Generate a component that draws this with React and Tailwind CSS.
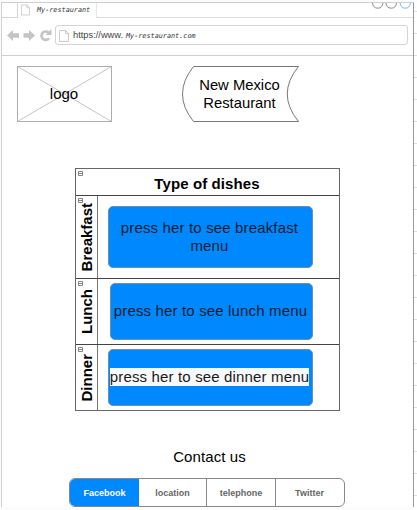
import React from "react";

function PageIcon({ className }) {
  return (
    <svg className={className} viewBox="0 0 10 12" fill="none" stroke="#cbcbcb">
      <path d="M.5 .5H6.5L9.5 3.5V11.5H.5Z M6.5 .5V3.5H9.5" />
    </svg>
  );
}

function CollapseIcon() {
  return (
    <svg className="absolute left-[2px] top-[2px] h-[5px] w-[5px]" viewBox="0 0 5 5">
      <path d="M.5 .5H4.5V4.5H.5Z M1 2.5H4" fill="none" stroke="#666" strokeWidth=".8" />
    </svg>
  );
}

function Browser() {
  return (
    <header className="h-[53px] shrink-0 border-b border-[#cfcfcf]">
      <div className="flex h-[15px]">
        <div className="w-4 border-b border-r border-[#d4d4d4]" />
        <div className="flex w-[79px] border-r border-[#e6e6e6] pl-[3px]">
          <PageIcon className="mt-px h-[12px] w-[9px]" />
          <span className="ml-[7px] whitespace-nowrap font-['DejaVu_Sans_Mono',monospace] text-[6.8px] italic leading-[14px] text-[#333]">
            My-restaurant
          </span>
        </div>
        <div className="flex grow justify-end border-b border-[#dedede]">
          <svg className="h-[9px] w-[44px]" viewBox="0 0 44 9" fill="none">
            <path d="M3.500 0A5.300 6 0 0 0 14 0M17 0A5.300 6 0 0 0 27.500 0" stroke="#8b8b8b" />
            <path d="M31 0A5.300 6 0 0 0 41.500 0" stroke="#7eb8e6" />
          </svg>
        </div>
      </div>
      <div className="flex pt-[7px]">
        <svg className="ml-[4px] mt-[2px] h-[16px] w-[46px]" viewBox="0 0 46 16">
          <path d="M1 8.500L7 3V6.200H13V10.800H7V14Z M29 8.500L23 3V6.200H17.500V10.800H23V14Z" fill="#c4c4c4" />
          <path d="M43 11.300A4.200 4.200 0 1 1 42.500 5.500" fill="none" stroke="#c4c4c4" strokeWidth="2.600" />
          <path d="M45.500 2V8H39.500Z" fill="#c4c4c4" />
        </svg>
        <div className="ml-[3px] flex h-[20px] w-[353px] rounded-[3px] border border-[#d4d4d4]">
          <PageIcon className="ml-[3px] mt-[4px] h-[12px] w-[10px]" />
          <span className="ml-[4px] w-[53px] whitespace-nowrap text-[9.3px] leading-[18px] text-[#444]">https://www.</span>
          <span className="whitespace-nowrap font-['DejaVu_Sans_Mono',monospace] text-[6.8px] italic leading-[20px] text-[#333]">
            My-restaurant.com
          </span>
        </div>
      </div>
    </header>
  );
}

function Lane({ label, height, children }) {
  return (
    <div className={`relative flex border-t border-[#444] ${height}`}>
      <CollapseIcon />
      <div className="flex w-[22px] items-center justify-center border-r border-[#777]">
        <span className="rotate-180 whitespace-nowrap text-[15px] font-bold leading-[18px] [writing-mode:vertical-rl]">
          {label}
        </span>
      </div>
      {children}
    </div>
  );
}

const button =
  "flex items-center justify-center rounded-[5px] border border-[#6a8fb5] bg-[#0089ff] pr-[2px] text-center text-[15px] leading-[18px] tracking-[0.15px] text-[#0b1c30]";

export default function App() {
  return (
    <div className="flex h-[510px] w-[417px] overflow-hidden bg-[#fcfcfc] pl-[1px] pt-[2px] font-['Liberation_Sans',Arial,sans-serif] text-black">
      <div className="flex h-[505px] w-[413px] shrink-0 flex-col border-l border-r border-t border-l-[#d0d0d0] border-r-[#999] border-t-[#cfcfcf] bg-white">
        <Browser />
        <div className="flex pl-[15px] pt-[10px]">
          <div className="relative flex h-[56px] w-[95px] items-center justify-center">
            <svg className="absolute inset-0 h-[56px] w-[95px]" viewBox="0 0 95 56" fill="none">
              <path d="M.5 .5L94.500 55.500M94.500 .5L.5 55.500" stroke="#c4c4c4" />
              <rect x=".5" y=".5" width="94" height="55" stroke="#adadad" />
            </svg>
            <span className="relative pr-px text-[15px] leading-[18px]">logo</span>
          </div>
          <div className="relative ml-[70px] flex h-[56px] w-[117px] items-center justify-center">
            <svg className="absolute inset-0 h-[56px] w-[117px]" viewBox="0 0 117 56" fill="none">
              <path d="M11.500 .5H116.500Q94 28 116.500 55.500H11.500Q-10.500 28 11.500 .5Z" stroke="#777" />
            </svg>
            <p className="relative pr-[2px] text-center text-[14.8px] leading-[18px]">
              New Mexico
              <br />
              Restaurant
            </p>
          </div>
        </div>

        <section className="ml-[73px] mt-[46px] h-[243px] w-[265px] border border-[#666]">
          <div className="relative h-[26px] pr-px pt-[6px] text-center text-[15px] font-bold leading-[18px] tracking-[0.1px]">
            <CollapseIcon />
            Type of dishes
          </div>
          <Lane label="Breakfast" height="h-[83px]">
            <button className={`${button} ml-[10px] mt-[10px] h-[62px] w-[205px]`}>
              <span>press her to see breakfast<br />menu</span>
            </button>
          </Lane>
          <Lane label="Lunch" height="h-[66px]">
            <button className={`${button} ml-[12px] mt-[4px] h-[57px] w-[203px] pb-[2px]`}>press her to see lunch menu</button>
          </Lane>
          <Lane label="Dinner" height="h-[66px]">
            <button className={`${button} ml-[10px] mt-[4px] h-[57px] w-[205px] pb-[2px]`}>
              <span className="whitespace-nowrap bg-[#f8f9fa] text-[#1a1a1a]">press her to see dinner menu</span>
            </button>
          </Lane>
        </section>

        <h2 className="ml-[170px] mt-[37px] w-[75px] whitespace-nowrap text-center text-[15px] leading-[18px] tracking-[0.1px]">Contact us</h2>
        <nav className="ml-[67px] mt-[12px] flex h-[29px] w-[276px] shrink-0 overflow-hidden rounded-[6px] border border-[#888] text-center text-[9px] font-bold leading-[28px] text-[#666]">
          <a className="w-[69px] bg-[#0089ff] text-white">Facebook</a>
          <a className="w-[68px] border-r border-[#888]">location</a>
          <a className="w-[69px] border-r border-[#888]">telephone</a>
          <a className="grow pr-px">Twitter</a>
        </nav>
      </div>
      <div className="h-[508px] w-[3px] shrink-0 bg-white bg-[repeating-linear-gradient(to_bottom,transparent_0_9px,#ddd_9px_10px,transparent_10px_22px)]" />
    </div>
  );
}
